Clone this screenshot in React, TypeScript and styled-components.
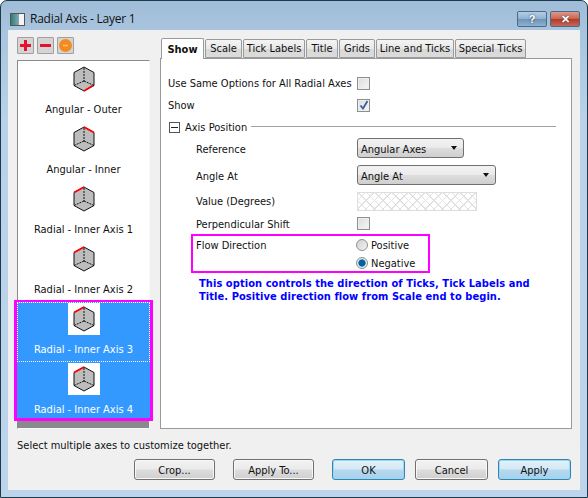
import React, { FC } from "react";
import styled, { createGlobalStyle } from "styled-components";

const Global = createGlobalStyle`
  html, body { margin: 0; padding: 0; background: #fff; }
  * { box-sizing: border-box; }
`;

const Frame = styled.div`
  width: 588px;
  height: 498px;
  border: 1px solid #1c3a4a;
  border-radius: 7px 7px 0 0;
  background: linear-gradient(180deg, #9fbcd8 0, #a9c4de 30px, #b9d2ea 120px, #bcd5ec 100%);
  display: flex;
  flex-direction: column;
  padding: 0 7px 7px;
  font-family: "DejaVu Sans Condensed", "DejaVu Sans", sans-serif;
  font-stretch: condensed;
  font-size: 11px;
  color: #111;
`;

const TitleBar = styled.div`
  height: 29px;
  display: flex;
  align-items: flex-start;
  padding-top: 9px;
  flex: none;
`;

const TitleIcon = styled.div`
  width: 15px;
  height: 13px;
  margin: 3px 5px 0 2px;
  border: 1px solid #555;
  background: linear-gradient(90deg, #2f7f78 0, #7fa9b5 60%, #f4f4f4 60%);
`;

const TitleText = styled.div`
  font: 12px/18px "Open Sans", sans-serif;
  letter-spacing: -0.25px;
  flex: 1;
`;

const CaptionButton = styled.div<{ $close?: boolean }>`
  width: 30px;
  height: 16px;
  margin-top: 1px;
  margin-left: ${(p) => (p.$close ? 3 : 0)}px;
  border: 1px solid #4a6a85;
  border-radius: 2px;
  color: #fff;
  font: bold 11px/14px "Liberation Sans", sans-serif;
  text-align: center;
  text-shadow: 0 0 2px #333;
  background: ${(p) =>
    p.$close
      ? "linear-gradient(180deg, #dc9a8c 0, #c9624f 50%, #b23a28 52%, #c9655a 100%)"
      : "linear-gradient(180deg, #b3cde4 0, #8fb1d1 50%, #6d93b8 52%, #8fb1d1 100%)"};
`;

const Body = styled.div`
  flex: 1;
  background: #f0f0f0;
  padding: 7px 8px 9px 9px;
  display: flex;
  flex-direction: column;
`;

const Main = styled.div`
  display: flex;
  height: 392px;
  flex: none;
`;

const LeftCol = styled.div`
  width: 133px;
  margin-right: 10px;
  display: flex;
  flex-direction: column;
  flex: none;
`;

const ToolRow = styled.div`
  display: flex;
  gap: 3px;
  height: 23px;
  flex: none;
`;

const ToolButton = styled.div`
  width: 17px;
  height: 17px;
  border: 1px solid #a0a0a0;
  border-radius: 1px;
  background: #d4d4d4;
  display: flex;
  align-items: center;
  justify-content: center;
`;

const AxisList = styled.div`
  height: 369px;
  background: #fff;
  border: 1px solid #f8f8f8;
  border-top: 1px solid #8a8a8a;
  border-left: 1px solid #8a8a8a;
  display: flex;
  flex-direction: column;
`;

const AxisItem = styled.div<{ $selected?: boolean; $focus?: boolean }>`
  height: 60px;
  flex: none;
  display: flex;
  flex-direction: column;
  align-items: center;
  text-align: center;
  padding-top: ${(p) => (p.$selected ? 0 : 1)}px;
  color: ${(p) => (p.$selected ? "#fff" : "#111")};
  border: 1px dotted ${(p) => (p.$focus ? "#fff" : "transparent")};
`;

const IconBox = styled.div`
  width: 32px;
  height: 32px;
  background: #fff;
  display: flex;
  align-items: center;
  justify-content: center;
  flex: none;
`;

const AxisLabel = styled.div`
  line-height: 16px;
  margin-top: 7px;
  white-space: nowrap;
`;

const Selection = styled.div`
  height: 121px;
  flex: none;
  margin: -1px -4px 0 -4px;
  border: 3px solid #ff00ff;
  border-top-width: 2px;
  background: #3399ff;
  overflow: hidden;
  z-index: 1;
`;

const ListEnd = styled.div`
  flex: 1;
  background: #8a8a8a;
`;

const RightCol = styled.div`
  flex: 1;
  display: flex;
  flex-direction: column;
  min-width: 0;
`;

const TabStrip = styled.div`
  display: flex;
  height: 21px;
  align-items: flex-end;
  padding-left: 1px;
  flex: none;
`;

const Tab = styled.div<{ $active?: boolean; $w: number }>`
  width: ${(p) => p.$w}px;
  height: ${(p) => (p.$active ? 21 : 19)}px;
  margin-bottom: ${(p) => (p.$active ? -1 : 0)}px;
  margin-right: 1px;
  border: 1px solid #9a9a9a;
  border-bottom: ${(p) => (p.$active ? "none" : "1px solid #9a9a9a")};
  border-radius: 2px 2px 0 0;
  background: ${(p) => (p.$active ? "#fff" : "linear-gradient(180deg, #f4f4f4 0, #e8e8e8 50%, #d8d8d8 52%, #dcdcdc 100%)")};
  font-weight: ${(p) => (p.$active ? 700 : 400)};
  text-align: center;
  line-height: ${(p) => (p.$active ? 21 : 18)}px;
  white-space: nowrap;
  z-index: ${(p) => (p.$active ? 1 : 0)};
`;

const Panel = styled.div`
  flex: 1;
  background: #fff;
  border: 1px solid #9a9a9a;
  padding: 12px 0 0 7px;
`;

const Row = styled.div<{ $h: number; $indent?: boolean }>`
  height: ${(p) => p.$h}px;
  display: flex;
  align-items: center;
  padding-left: ${(p) => (p.$indent ? 28 : 0)}px;
`;

const RowLabel = styled.div<{ $indent?: boolean; $lift?: number }>`
  width: ${(p) => (p.$indent ? 161 : 189)}px;
  padding-top: ${(p) => p.$lift ?? 2}px;
  white-space: nowrap;
  flex: none;
`;

const Check = styled.div`
  width: 13px;
  height: 13px;
  margin-top: 2px;
  border: 1px solid #8e8f8f;
  background: linear-gradient(135deg, #dcdcdc, #f6f6f6);
  box-shadow: inset 0 0 0 1px #eee;
  display: flex;
  align-items: center;
  justify-content: center;
`;

const GroupHead = styled.div`
  height: 22px;
  display: flex;
  align-items: center;
  padding-left: 1px;
`;

const GroupTitle = styled.div`
  padding-top: 2px;
  white-space: nowrap;
`;

const Toggle = styled.div`
  width: 11px;
  height: 11px;
  margin: 2px 5px 0 0;
  border: 1px solid #555;
  display: flex;
  align-items: center;
  justify-content: center;
  &::before {
    content: "";
    width: 7px;
    height: 1px;
    background: #222;
  }
`;

const GroupLine = styled.div`
  flex: 1;
  max-width: 305px;
  height: 1px;
  background: #a0a0a0;
  margin-left: 4px;
`;

const Select = styled.div<{ $w: number }>`
  width: ${(p) => p.$w}px;
  height: 20px;
  border: 1px solid #707070;
  border-radius: 3px;
  padding: 2px 6px 0 3px;
  display: flex;
  align-items: center;
  justify-content: space-between;
  background: linear-gradient(180deg, #f2f2f2 0, #ebebeb 48%, #dddddd 52%, #cfcfcf 100%);
  &::after {
    content: "";
    margin-top: -2px;
    border: 3.5px solid transparent;
    border-top: 4px solid #111;
    border-bottom: none;
  }
`;

const HatchedInput = styled.div`
  width: 120px;
  height: 19px;
  border: 1px solid #dedede;
  background-color: #fff;
  background-image: repeating-linear-gradient(45deg, #e2e2e2 0 1px, transparent 1px 6px),
    repeating-linear-gradient(-45deg, #e2e2e2 0 1px, transparent 1px 6px);
`;

const FlowBox = styled.div`
  width: 239px;
  height: 39px;
  margin-left: 23px;
  border: 2px solid #ff00ff;
  display: flex;
  padding-left: 3px;
`;

const FlowLabel = styled.div`
  width: 160px;
  flex: none;
  line-height: 18px;
  padding-top: 1px;
`;

const RadioGroup = styled.div`
  display: flex;
  flex-direction: column;
`;

const RadioRow = styled.div`
  height: 18px;
  flex: none;
  display: flex;
  align-items: center;
  gap: 3px;
`;

const Radio = styled.div<{ $on?: boolean }>`
  width: 12px;
  height: 12px;
  border-radius: 50%;
  border: 1px solid #8e8f8f;
  background: ${(p) =>
    p.$on
      ? "radial-gradient(circle, #0a5f9a 0 3px, #2aa0d8 3.5px, #e8e8e8 4px)"
      : "linear-gradient(135deg, #d0d0d0, #f4f4f4)"};
`;

const Note = styled.div`
  margin: 4px 0 0 31px;
  color: #0000ff;
  font-weight: 700;
  line-height: 13px;
  letter-spacing: 0.07px;
  white-space: nowrap;
`;

const Hint = styled.div`
  height: 30px;
  padding-top: 9px;
  line-height: 16px;
  flex: none;
`;

const Buttons = styled.div`
  display: flex;
  height: 21px;
  padding-left: 117px;
`;

const Button = styled.div<{ $w: number; $gap: number; $default?: boolean }>`
  width: ${(p) => p.$w}px;
  height: 21px;
  margin-right: ${(p) => p.$gap}px;
  border: 1px solid ${(p) => (p.$default ? "#3c7fb1" : "#707070")};
  border-radius: 3px;
  text-align: center;
  line-height: 21px;
  background: ${(p) =>
    p.$default
      ? "linear-gradient(180deg, #e4f2fa 0, #d4e8f5 48%, #b5d8ef 52%, #a9d0ea 100%)"
      : "linear-gradient(180deg, #f2f2f2 0, #ebebeb 48%, #dddddd 52%, #cfcfcf 100%)"};
  box-shadow: ${(p) => (p.$default ? "inset 0 0 0 1px #8fdcf5" : "inset 0 0 0 1px #f8f8f8")};
`;

type Red = "bottomRight" | "topRight" | "topLeft";

const redPaths: Record<Red, string> = {
  bottomRight: "M11 25 L20 19.5",
  topRight: "M11 1 L21 6.5",
  topLeft: "M1 6.5 L11 1",
};

const Cube: FC<{ red: Red }> = ({ red }) => (
  <svg width="22" height="26" viewBox="0 0 22 26">
    <path d="M11 1 L21 6.5 L21 19.5 L11 25 L1 19.5 L1 6.5 Z" fill="#bdbdbd" stroke="#111" strokeWidth="1" />
    <path d="M11 2 L11 15 M11 15 L1 19.5 M11 15 L21 19.5" fill="none" stroke="#111" strokeWidth="1" strokeDasharray="2 1" />
    <path d={redPaths[red]} fill="none" stroke="#f00" strokeWidth="1.6" />
  </svg>
);

const CheckMark: FC = () => (
  <svg width="10" height="10" viewBox="0 0 10 10">
    <path d="M1.5 5.5 L4 8.5 L8.5 1" fill="none" stroke="#3a5f9a" strokeWidth="1.8" />
  </svg>
);

const tabs = [
  { name: "Show", w: 43, active: true },
  { name: "Scale", w: 37 },
  { name: "Tick Labels", w: 62 },
  { name: "Title", w: 32 },
  { name: "Grids", w: 36 },
  { name: "Line and Ticks", w: 78 },
  { name: "Special Ticks", w: 71 },
];

const App: FC = () => (
  <>
    <Global />
    <Frame>
      <TitleBar>
        <TitleIcon />
        <TitleText>Radial Axis - Layer 1</TitleText>
        <CaptionButton>?</CaptionButton>
        <CaptionButton $close>✕</CaptionButton>
      </TitleBar>
      <Body>
        <Main>
          <LeftCol>
            <ToolRow>
              <ToolButton>
                <svg width="13" height="13" viewBox="0 0 13 13">
                  <path d="M6.5 1 V12 M1 6.5 H12" stroke="#e8102a" strokeWidth="3" />
                </svg>
              </ToolButton>
              <ToolButton>
                <svg width="13" height="13" viewBox="0 0 13 13">
                  <path d="M1 6.5 H12" stroke="#e8102a" strokeWidth="3" />
                </svg>
              </ToolButton>
              <ToolButton>
                <svg width="15" height="15" viewBox="0 0 15 15">
                  <circle cx="7.5" cy="7.5" r="6.5" fill="#f58a1f" />
                  <path d="M5 7.5 H10" stroke="#f5c080" strokeWidth="1.5" />
                </svg>
              </ToolButton>
            </ToolRow>
            <AxisList>
              <AxisItem>
                <IconBox><Cube red="bottomRight" /></IconBox>
                <AxisLabel>Angular - Outer</AxisLabel>
              </AxisItem>
              <AxisItem>
                <IconBox><Cube red="topRight" /></IconBox>
                <AxisLabel>Angular - Inner</AxisLabel>
              </AxisItem>
              <AxisItem>
                <IconBox><Cube red="topLeft" /></IconBox>
                <AxisLabel>Radial - Inner Axis 1</AxisLabel>
              </AxisItem>
              <AxisItem>
                <IconBox><Cube red="topLeft" /></IconBox>
                <AxisLabel>Radial - Inner Axis 2</AxisLabel>
              </AxisItem>
              <Selection>
                <AxisItem $selected $focus>
                  <IconBox><Cube red="topLeft" /></IconBox>
                  <AxisLabel>Radial - Inner Axis 3</AxisLabel>
                </AxisItem>
                <AxisItem $selected>
                  <IconBox><Cube red="topLeft" /></IconBox>
                  <AxisLabel>Radial - Inner Axis 4</AxisLabel>
                </AxisItem>
              </Selection>
              <ListEnd />
            </AxisList>
          </LeftCol>
          <RightCol>
            <TabStrip>
              {tabs.map((t) => (
                <Tab key={t.name} $w={t.w} $active={t.active}>{t.name}</Tab>
              ))}
            </TabStrip>
            <Panel>
              <Row $h={22}>
                <RowLabel>Use Same Options for All Radial Axes</RowLabel>
                <Check />
              </Row>
              <Row $h={22}>
                <RowLabel>Show</RowLabel>
                <Check><CheckMark /></Check>
              </Row>
              <GroupHead>
                <Toggle />
                <GroupTitle>Axis Position</GroupTitle>
                <GroupLine />
              </GroupHead>
              <Row $h={22} $indent>
                <RowLabel $indent>Reference</RowLabel>
                <Select $w={107}>Angular Axes</Select>
              </Row>
              <Row $h={32} $indent>
                <RowLabel $indent>Angle At</RowLabel>
                <Select $w={139}>Angle At</Select>
              </Row>
              <Row $h={20} $indent>
                <RowLabel $indent $lift={0}>Value (Degrees)</RowLabel>
                <HatchedInput />
              </Row>
              <Row $h={23} $indent>
                <RowLabel $indent $lift={4}>Perpendicular Shift</RowLabel>
                <Check />
              </Row>
              <FlowBox>
                <FlowLabel>Flow Direction</FlowLabel>
                <RadioGroup>
                  <RadioRow><Radio />Positive</RadioRow>
                  <RadioRow><Radio $on />Negative</RadioRow>
                </RadioGroup>
              </FlowBox>
              <Note>
                This option controls the direction of Ticks, Tick Labels and
                <br />
                Title. Positive direction flow from Scale end to begin.
              </Note>
            </Panel>
          </RightCol>
        </Main>
        <Hint>Select multiple axes to customize together.</Hint>
        <Buttons>
          <Button $w={81} $gap={18}>Crop...</Button>
          <Button $w={81} $gap={18}>Apply To...</Button>
          <Button $w={73} $gap={10} $default>OK</Button>
          <Button $w={73} $gap={10}>Cancel</Button>
          <Button $w={73} $gap={0} $default>Apply</Button>
        </Buttons>
      </Body>
    </Frame>
  </>
);

export default App;
